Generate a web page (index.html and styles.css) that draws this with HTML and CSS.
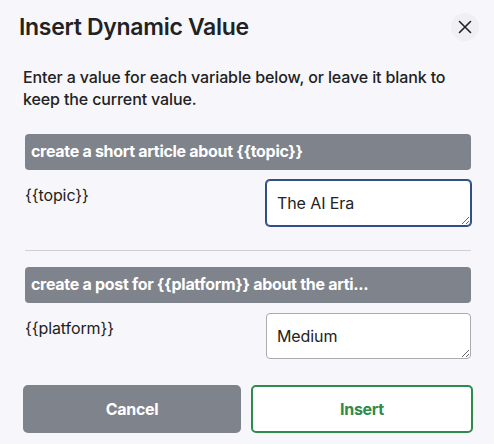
FILE: index.html
```html
<!DOCTYPE html>
<html>
<head>
<meta charset="utf-8">
<link rel="stylesheet" href="styles.css">
</head>
<body>
<div class="dialog">
  <div class="header">
    <h1 class="title">Insert Dynamic Value</h1>
    <button class="close" aria-label="Close">
      <svg width="14" height="14" viewBox="0 0 14 14"><path d="M1.5 1.5 L12.5 12.5 M12.5 1.5 L1.5 12.5" stroke="#222" stroke-width="1.6" stroke-linecap="round" fill="none"/></svg>
    </button>
  </div>
  <p class="intro">Enter a value for each variable below, or leave it blank to keep the current value.</p>

  <div class="section first">
    <div class="bar">create a short article about {{topic}}</div>
    <div class="row">
      <div class="label">{{topic}}</div>
      <textarea class="field focused">The AI Era</textarea>
    </div>
  </div>
  <hr class="divider">
  <div class="section">
    <div class="bar">create a post for {{platform}} about the arti...</div>
    <div class="row">
      <div class="label">{{platform}}</div>
      <textarea class="field">Medium</textarea>
    </div>
  </div>

  <div class="actions">
    <button class="btn cancel">Cancel</button>
    <button class="btn insert">Insert</button>
  </div>
</div>
</body>
</html>
```
FILE: styles.css
```css
html, body {
  margin: 0;
  padding: 0;
  background: #f7f7fb;
}
body {
  font-family: Inter, "Noto Sans", "Liberation Sans", sans-serif;
  color: #222;
}
.dialog {
  width: 494px;
  height: 444px;
  box-sizing: border-box;
  padding: 13px 23px 0 25px;
}
.header {
  display: flex;
  align-items: center;
  justify-content: space-between;
  margin-left: -6px;
  margin-right: -8px;
}
.title {
  margin: 0;
  font-size: 23px;
  font-weight: 600;
  line-height: 28px;
  letter-spacing: -0.3px;
  color: #222;
}
.close {
  width: 28px;
  height: 28px;
  border-radius: 50%;
  border: none;
  background: #efeff4;
  display: flex;
  align-items: center;
  justify-content: center;
  padding: 0;
}
.intro {
  margin: 25px 0 0 -2px;
  font-size: 16px;
  font-weight: 500;
  line-height: 22px;
  letter-spacing: -0.12px;
  color: #222;
}
.section.first {
  margin-top: 24px;
}
.bar {
  background: #7f838c;
  color: #fff;
  font-weight: 700;
  font-size: 16px;
  height: 36px;
  line-height: 35px;
  padding: 0 6px;
  border-radius: 4px;
  letter-spacing: -0.3px;
  white-space: nowrap;
  overflow: hidden;
}
.row {
  display: flex;
  justify-content: space-between;
  align-items: flex-start;
  margin-top: 10px;
}
.label {
  font-size: 16px;
  line-height: 20px;
  padding-top: 5px;
  letter-spacing: -0.1px;
}
.field {
  width: 205px;
  height: 46px;
  box-sizing: border-box;
  border: 1px solid #a9abb0;
  border-radius: 4px;
  background: #fff;
  font-family: Inter, "Noto Sans", "Liberation Sans", sans-serif;
  font-size: 16px;
  letter-spacing: -0.1px;
  color: #222;
  padding: 12px 10px;
  margin: 0;
  resize: vertical;
  outline: none;
}
.field.focused {
  border-color: #2f4f86;
  box-shadow: 0 0 0 1px #2f4f86;
}
.divider {
  border: none;
  border-top: 1px solid #cfcfd4;
  margin: 24px 0 16px 0;
}
.actions {
  display: flex;
  gap: 10px;
  margin: 26px -2px 0 -2px;
}
.btn {
  flex: 1;
  height: 48px;
  border-radius: 5px;
  font-family: Inter, "Noto Sans", "Liberation Sans", sans-serif;
  font-size: 16px;
  font-weight: 700;
  letter-spacing: -0.3px;
}
.cancel {
  background: #7f838c;
  border: none;
  color: #fff;
}
.insert {
  background: #fff;
  border: 2px solid #2e8b4b;
  color: #2e8b4b;
}
```
